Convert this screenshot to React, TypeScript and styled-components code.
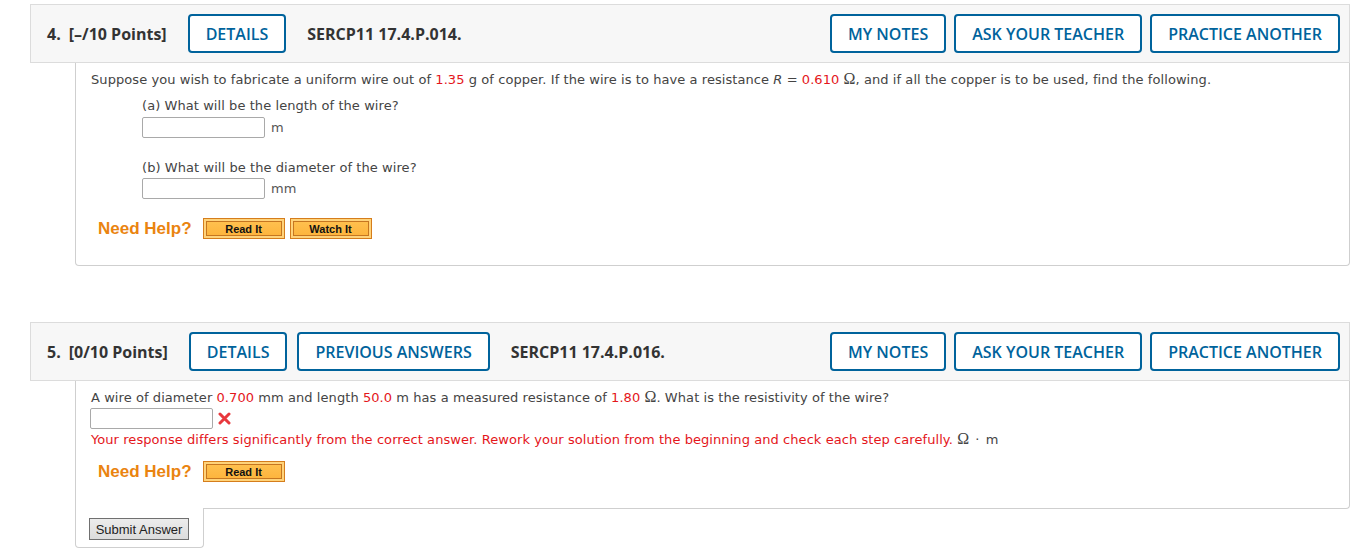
import React from "react";
import styled, { createGlobalStyle } from "styled-components";

const Global = createGlobalStyle`
  html, body { margin: 0; padding: 0; background: #fff; }
  body { font-family: "DejaVu Sans", Verdana, sans-serif; }
`;

const Page = styled.div`
  padding: 4px 16px 0 30px;
`;

const Question = styled.section<{ $gap?: number }>`
  margin-bottom: ${(p) => p.$gap ?? 0}px;
`;

const Header = styled.div`
  display: flex;
  align-items: center;
  height: 57px;
  background: #f7f7f7;
  border: 1px solid #dcdcdc;
  padding: 0 9px 0 16px;
  font-family: "Open Sans", sans-serif;
  color: #333;
`;

const Label = styled.div`
  font-size: 16px;
  font-weight: 700;
  margin-right: 21px;
  white-space: nowrap;
`;

const Num = styled.span`
  margin-right: 8px;
`;

const Code = styled.div`
  font-size: 16px;
  font-weight: 700;
  margin-left: 21px;
  white-space: nowrap;
`;

const BtnGroup = styled.div<{ $gap?: number }>`
  display: flex;
  gap: ${(p) => p.$gap ?? 10}px;
`;

const Spacer = styled.div`
  flex: 1;
`;

const HeadBtn = styled.button`
  height: 39px;
  padding: 0 16px;
  border: 2px solid #00639c;
  border-radius: 4px;
  background: #fff;
  color: #00639c;
  font-family: "Open Sans", sans-serif;
  font-size: 16px;
  font-weight: 600;
  text-transform: uppercase;
  cursor: pointer;
  white-space: nowrap;
`;

const Body = styled.div<{ $tabbed?: boolean }>`
  margin-left: 45px;
  border: 1px solid #cfcfcf;
  border-top: none;
  border-radius: 0 0 4px ${(p) => (p.$tabbed ? 0 : 4)}px;
  padding: 9px 16px 26px 15px;
  font-size: 13px;
  line-height: 16px;
  letter-spacing: 0.07px;
  color: #444;
`;

const Para = styled.p`
  margin: 0;
`;

const Red = styled.span`
  color: #e4161b;
`;

const Omega = styled.span`
  font-family: "Liberation Serif", serif;
  font-size: 16px;
  line-height: 0;
`;

const Part = styled.div<{ $top: number }>`
  margin: ${(p) => p.$top}px 0 0 51px;
`;

const AnswerRow = styled.div<{ $top?: number; $shift?: number }>`
  display: flex;
  align-items: center;
  gap: 6px;
  margin-top: ${(p) => p.$top ?? 3}px;
  margin-left: ${(p) => p.$shift ?? 0}px;
`;

const Input = styled.input`
  box-sizing: border-box;
  width: 123px;
  height: 21px;
  border: 1px solid #a9a9a9;
  border-radius: 2px;
  margin: 0;
  background: #fff;
`;

const Unit = styled.span`
  color: #555;
`;

const Error = styled.p`
  margin: 3px 0 0;
  color: #e4161b;
`;

const Gray = styled.span`
  color: #444;
  word-spacing: 2px;
`;

const Help = styled.div<{ $top: number }>`
  display: flex;
  align-items: center;
  height: 21px;
  margin: ${(p) => p.$top}px 0 0 7px;
  font-family: "Liberation Sans", Arial, sans-serif;
  letter-spacing: 0;
`;

const HelpText = styled.span`
  font-size: 17px;
  font-weight: 700;
  color: #ea8410;
  margin-right: 11px;
`;

const HelpBtn = styled.button`
  box-sizing: border-box;
  width: 82px;
  height: 21px;
  padding: 2px;
  margin-right: 5px;
  border: 1px solid #d57d1c;
  background: #ffd37a;
  cursor: pointer;
`;

const HelpInner = styled.span`
  display: flex;
  align-items: center;
  justify-content: center;
  height: 100%;
  box-sizing: border-box;
  border: 1px solid #c67620;
  background: linear-gradient(#ffc04e, #fdb53e);
  font-family: "Liberation Sans", Arial, sans-serif;
  font-size: 11px;
  font-weight: 700;
  color: #111;
`;

const Tab = styled.div`
  margin-left: 45px;
  width: 114px;
  margin-top: -1px;
  background: #fff;
  border: 1px solid #cfcfcf;
  border-top: none;
  border-radius: 0 0 4px 4px;
  padding: 10px 0 7px 13px;
`;

const Submit = styled.button`
  box-sizing: border-box;
  width: 100px;
  height: 22px;
  padding: 0;
  border: 1px solid #707070;
  background: linear-gradient(#ececec, #dcdcdc);
  font-family: "Liberation Sans", Arial, sans-serif;
  font-size: 13px;
  color: #222;
`;

const XIcon = () => (
  <svg width="13" height="13" viewBox="0 0 13 13" style={{ marginLeft: -1 }}>
    <path d="M2 2 L11 11 M11 2 L2 11" stroke="#e8383d" strokeWidth="3" strokeLinecap="round" />
  </svg>
);

const HelpButton = ({ children }: { children: React.ReactNode }) => (
  <HelpBtn>
    <HelpInner>{children}</HelpInner>
  </HelpBtn>
);

const RightButtons = () => (
  <>
    <Spacer />
    <BtnGroup $gap={8}>
      <HeadBtn>My Notes</HeadBtn>
      <HeadBtn>Ask Your Teacher</HeadBtn>
      <HeadBtn>Practice Another</HeadBtn>
    </BtnGroup>
  </>
);

export default function App() {
  return (
    <Page>
      <Global />
      <Question $gap={56}>
        <Header>
          <Label>
            <Num>4.</Num>[–/10 Points]
          </Label>
          <BtnGroup>
            <HeadBtn>Details</HeadBtn>
          </BtnGroup>
          <Code>SERCP11 17.4.P.014.</Code>
          <RightButtons />
        </Header>
        <Body>
          <Para>
            Suppose you wish to fabricate a uniform wire out of <Red>1.35</Red> g of copper. If the wire is
            to have a resistance <i>R</i> = <Red>0.610</Red> <Omega>Ω</Omega>, and if all the copper is to be
            used, find the following.
          </Para>
          <Part $top={10}>
            (a) What will be the length of the wire?
            <AnswerRow>
              <Input />
              <Unit>m</Unit>
            </AnswerRow>
          </Part>
          <Part $top={22}>
            (b) What will be the diameter of the wire?
            <AnswerRow $top={2}>
              <Input />
              <Unit>mm</Unit>
            </AnswerRow>
          </Part>
          <Help $top={19}>
            <HelpText>Need Help?</HelpText>
            <HelpButton>Read It</HelpButton>
            <HelpButton>Watch It</HelpButton>
          </Help>
        </Body>
      </Question>

      <Question>
        <Header>
          <Label>
            <Num>5.</Num>[0/10 Points]
          </Label>
          <BtnGroup>
            <HeadBtn>Details</HeadBtn>
            <HeadBtn>Previous Answers</HeadBtn>
          </BtnGroup>
          <Code>SERCP11 17.4.P.016.</Code>
          <RightButtons />
        </Header>
        <Body $tabbed>
          <Para>
            A wire of diameter <Red>0.700</Red> mm and length <Red>50.0</Red> m has a measured resistance of{" "}
            <Red>1.80</Red> <Omega>Ω</Omega>. What is the resistivity of the wire?
          </Para>
          <AnswerRow $top={2} $shift={-1}>
            <Input />
            <XIcon />
          </AnswerRow>
          <Error>
            Your response differs significantly from the correct answer. Rework your solution from the
            beginning and check each step carefully. <Gray><Omega>Ω</Omega> · m</Gray>
          </Error>
          <Help $top={13}>
            <HelpText>Need Help?</HelpText>
            <HelpButton>Read It</HelpButton>
          </Help>
        </Body>
        <Tab>
          <Submit>Submit Answer</Submit>
        </Tab>
      </Question>
    </Page>
  );
}
